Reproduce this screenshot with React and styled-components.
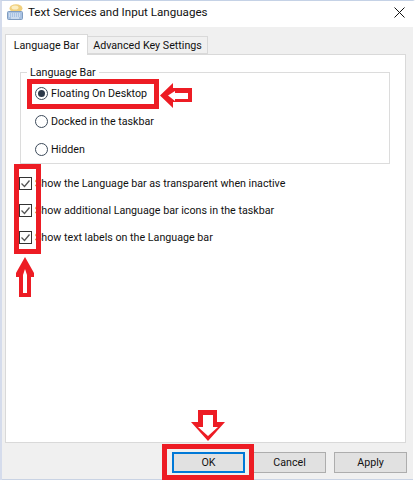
import React from "react";
import styled, { createGlobalStyle } from "styled-components";

const Global = createGlobalStyle`
  html, body { margin: 0; padding: 0; background: #fff; }
  #root { width: 415px; height: 480px; overflow: hidden; }
`;
const Page = styled.div`
  position: relative; width: 415px; height: 480px; box-sizing: border-box;
  display: flex; flex-direction: column; overflow: hidden; white-space: nowrap;
  background: #f0f0f0; font: 10.7px/15px Roboto, "Liberation Sans", sans-serif; color: #111;
  border-top: 1px solid #c5d2e6; border-left: 2px solid #d5dcec; border-right: 2px solid #fff;
`;
const TitleBar = styled.div`
  height: 26px; box-sizing: border-box; background: #fff; display: flex; align-items: center; gap: 5px;
  padding: 0 0 4px 5px; flex: none;
`;
const TitleText = styled.div`font-size: 11.6px; flex: 1;`;
const Close = styled.svg`width: 11px; height: 11px; margin-right: 8px;`;
const Body = styled.div`
  flex: 1; display: flex; flex-direction: column; padding: 7px 7px 0 3px; min-height: 0;
`;
const Tabs = styled.div`display: flex; align-items: flex-end; height: 20px; flex: none;`;
const Tab = styled.div`
  box-sizing: border-box; border: 1px solid #d9d9d9; display: flex; align-items: center; justify-content: center;
  width: ${p => p.$w}px; height: ${p => (p.$active ? 21 : 18)}px;
  background: ${p => (p.$active ? "#fff" : "#f0f0f0")};
  border-bottom: ${p => (p.$active ? "none" : "1px solid #d9d9d9")};
  border-left: ${p => (p.$active ? "1px solid #d9d9d9" : "none")};
  margin-bottom: ${p => (p.$active ? -1 : 0)}px; position: relative;
`;
const Panel = styled.div`
  flex: 1; background: #fff; border: 1px solid #d9d9d9; padding: 17px 15px 0 14px; min-height: 0;
`;
const Group = styled.div`
  border: 1px solid #dcdcdc; height: 92px; box-sizing: border-box; position: relative; padding: 6px 0 0 14px;
`;
const Legend = styled.div`
  position: absolute; left: 6px; top: -8px; background: #fff; padding: 0 3px;
`;
const Row = styled.div`display: flex; align-items: center; gap: 3px; height: 28px;`;
const Radio = styled.span`
  box-sizing: border-box; width: 13px; height: 13px; border-radius: 50%; border: 1px solid #3c4a5a; flex: none;
  display: flex; align-items: center; justify-content: center;
  &::after { content: ""; width: 7px; height: 7px; border-radius: 50%; background: ${p => (p.$on ? "#2d3a4a" : "transparent")}; }
`;
const Checks = styled.div`display: flex; flex-direction: column; padding-top: 6px;`;
const CheckRow = styled.div`display: flex; align-items: center; height: 27px;`;
const Box = styled.svg`width: 13px; height: 13px; flex: none; margin-right: 3px; margin-left: -1px;`;
const Footer = styled.div`
  height: 37px; flex: none; display: flex; align-items: flex-start; justify-content: flex-end; gap: 8px;
  padding-top: 9px; margin-right: -1px; box-sizing: border-box;
`;
const Button = styled.div`
  box-sizing: border-box; width: 73px; height: 21px; background: #e1e1e1;
  display: flex; align-items: center; justify-content: center;
  border: ${p => (p.$def ? "2px solid #0078d7" : "1px solid #adadad")};
`;
const BottomLine = styled.div`position: absolute; left: 0; right: 0; bottom: 0; height: 1px; background: #c9d3e4;`;
const RedBox = styled.div`
  position: absolute; box-sizing: border-box; border: 5px solid #ed1c24;
  left: ${p => p.$x}px; top: ${p => p.$y}px; width: ${p => p.$w}px; height: ${p => p.$h}px;
`;
const Arrow = styled.svg`
  position: absolute; left: ${p => p.$x}px; top: ${p => p.$y}px;
`;

const Ico = () => (
  <svg width="16" height="17" viewBox="0 0 16 17">
    <ellipse cx="9" cy="4.5" rx="6.5" ry="4.2" fill="#f0cf7c" />
    <ellipse cx="8" cy="3.5" rx="3.5" ry="2" fill="#fbeec2" />
    <rect x="0.5" y="7.5" width="15" height="8" rx="1" fill="#a9c2e2" stroke="#7f9cc0" />
    <path d="M2 10h12M2 12h12" stroke="#eef4fb" strokeWidth="1" strokeDasharray="1 1" />
    <path d="M4 14h8" stroke="#eef4fb" strokeWidth="1" />
  </svg>
);
const Check = () => (
  <Box viewBox="0 0 13 13">
    <rect x="0.5" y="0.5" width="12" height="12" fill="#fff" stroke="#333" />
    <path d="M2.5 6.5l3 3 5-6" fill="none" stroke="#555" strokeWidth="1.3" />
  </Box>
);

export default function App() {
  return (
    <Page>
      <Global />
      <TitleBar>
        <Ico />
        <TitleText>Text Services and Input Languages</TitleText>
        <Close viewBox="0 0 11 11"><path d="M.5.5l10 10M10.5.5l-10 10" stroke="#111" fill="none" /></Close>
      </TitleBar>
      <Body>
        <Tabs>
          <Tab $active $w={83}>Language Bar</Tab>
          <Tab $w={120}>Advanced Key Settings</Tab>
        </Tabs>
        <Panel>
          <Group>
            <Legend>Language Bar</Legend>
            <Row><Radio $on />Floating On Desktop</Row>
            <Row><Radio />Docked in the taskbar</Row>
            <Row><Radio />Hidden</Row>
          </Group>
          <Checks>
            <CheckRow><Check />Show the Language bar as transparent when inactive</CheckRow>
            <CheckRow><Check />Show additional Language bar icons in the taskbar</CheckRow>
            <CheckRow><Check />Show text labels on the Language bar</CheckRow>
          </Checks>
        </Panel>
        <Footer>
          <Button $def>OK</Button>
          <Button>Cancel</Button>
          <Button>Apply</Button>
        </Footer>
      </Body>
      <BottomLine />
      <RedBox $x={25} $y={78} $w={132} $h={30} />
      <RedBox $x={12} $y={163} $w={27} $h={90} />
      <RedBox $x={160} $y={443} $w={92} $h={36} />
      <Arrow $x={158} $y={82} width="33" height="25" viewBox="0 0 33 25">
        <path d="M0 12.5L13 0v5h19v14H13v6z" fill="#ed1c24" />
        <path d="M8 12.5L15 8v2h13v6H15v2z" fill="#fff" />
      </Arrow>
      <Arrow $x={14} $y={256} width="18" height="40" viewBox="0 0 18 40">
        <path d="M9 0L18 16v4h-3v20H3V20H0v-4z" fill="#ed1c24" />
        <path d="M9 12L11 18v18H7V18z" fill="#fff" />
      </Arrow>
      <Arrow $x={189} $y={409} width="34" height="32" viewBox="0 0 34 32">
        <path d="M7 0h19v12h8L17 31 0 12h7z" fill="#ed1c24" />
        <path d="M12 5h10v12h5L17 26 7 17h5z" fill="#fff" />
      </Arrow>
    </Page>
  );
}
